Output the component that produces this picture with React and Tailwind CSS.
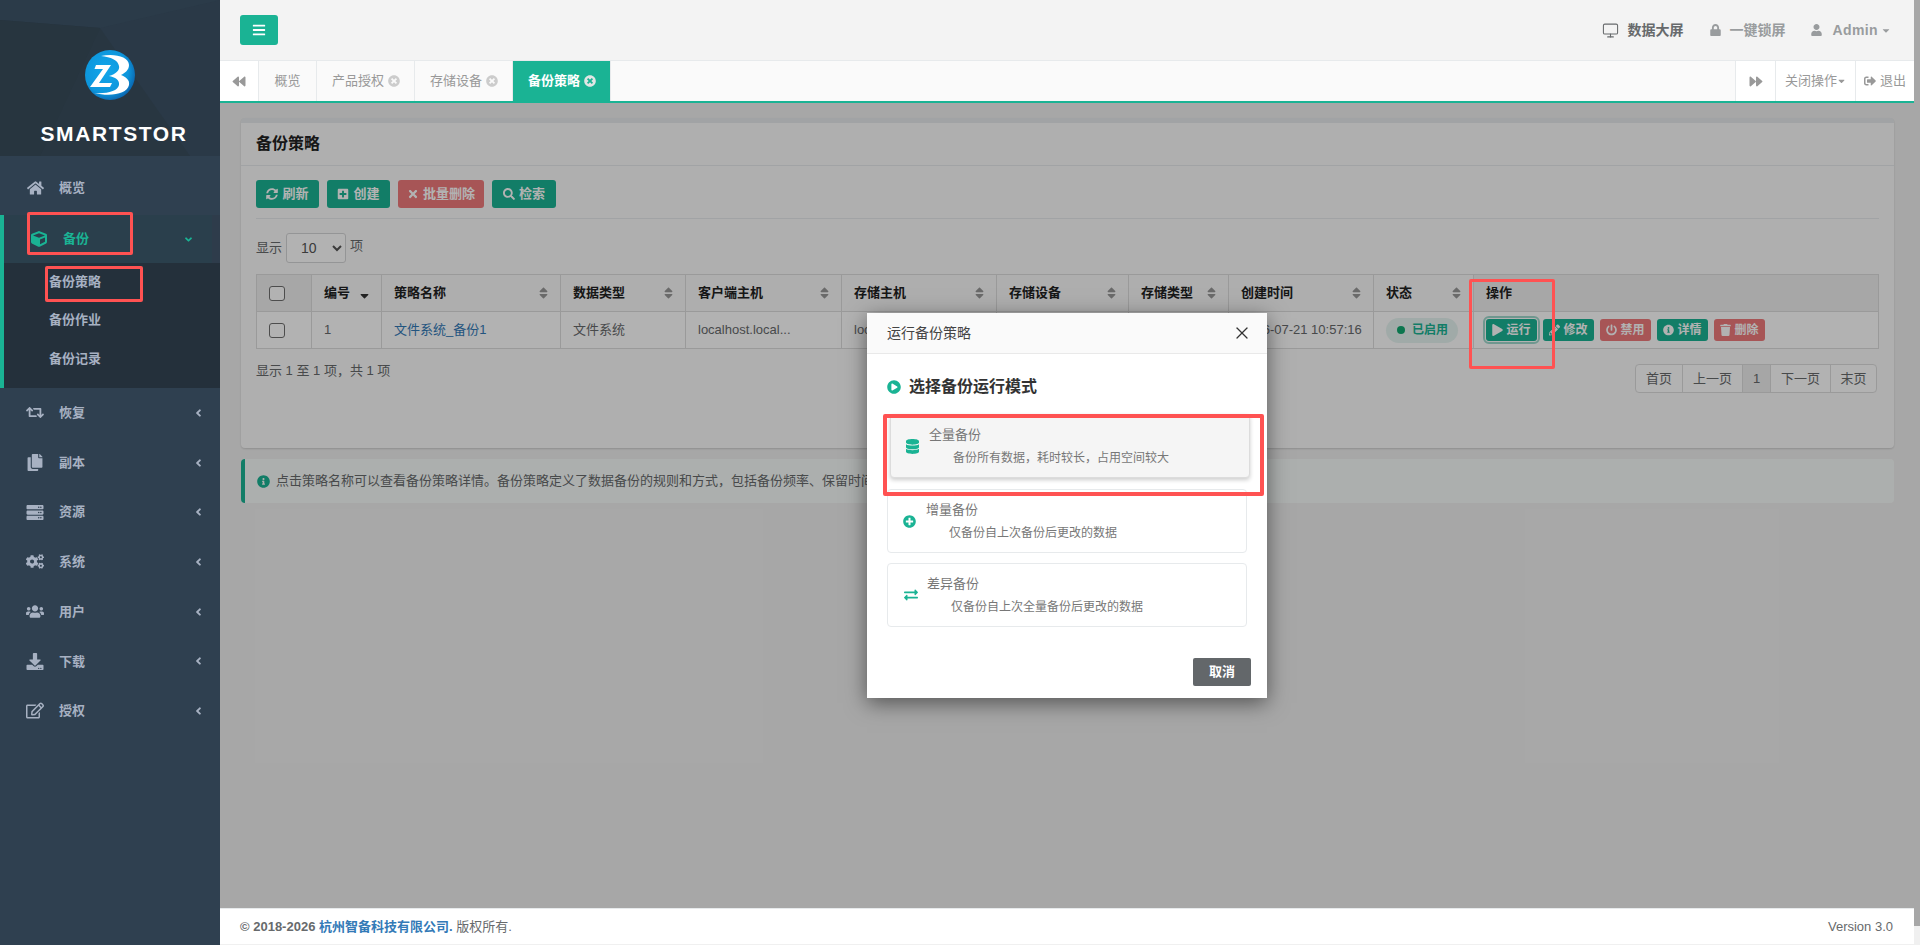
import React from 'react';
import { FaHome, FaCube, FaRetweet, FaCopy, FaServer, FaCogs, FaUsers, FaDownload, FaRegEdit, FaAngleLeft, FaAngleDown, FaBars, FaLock, FaUser, FaCaretDown, FaBackward, FaForward, FaSignOutAlt, FaTimesCircle, FaSyncAlt, FaPlusSquare, FaTimes, FaSearch, FaSort, FaSortDown, FaPlay, FaPencilAlt, FaPowerOff, FaInfoCircle, FaTrash, FaDatabase, FaPlusCircle, FaExchangeAlt, FaPlayCircle } from 'react-icons/fa';
import { Monitor, X } from 'lucide-react';

const FONT = '"Liberation Sans","Noto Sans CJK SC",sans-serif';

function Logo() {
  return (
    <svg width="50" height="50" viewBox="0 0 50 50">
      <defs>
        <radialGradient id="lg" cx="42%" cy="42%" r="62%">
          <stop offset="0%" stopColor="#12a6ea" />
          <stop offset="72%" stopColor="#0d96dc" />
          <stop offset="100%" stopColor="#0a63ad" />
        </radialGradient>
      </defs>
      <circle cx="25" cy="25" r="25" fill="url(#lg)" />
      <path d="M16 6C28 3 44 6 44 15C44 20 40 23 36 25C41 27 45 30 44 35C42 44 26 47 9 43C22 44 33 41 34 35C35 30 30 27 24 26C31 24 35 20 34 16C33 10 26 7 16 6Z" fill="#fff" />
      <path d="M11 15L26 15L14 33L27 33L25 37L5 37L18 19L9.500 19Z" fill="#fff" />
    </svg>
  );
}

const navItems = [
  [FaRetweet, '恢复'],
  [FaCopy, '副本'],
  [FaServer, '资源'],
  [FaCogs, '系统'],
  [FaUsers, '用户'],
  [FaDownload, '下载'],
  [FaRegEdit, '授权'],
];

function Sidebar() {
  return (
    <aside className="w-[220px] shrink-0 bg-[#2f4050] text-[13px] font-bold text-[#a7b1c2] flex flex-col">
      <div className="relative h-[156px] bg-[#283641] overflow-hidden flex flex-col items-center">
        <svg className="absolute inset-0" width="220" height="156" viewBox="0 0 220 156">
          <polygon points="0,0 220,0 220,30 100,28 0,20" fill="#2b3b49" />
          <polygon points="100,28 220,0 220,156 190,156" fill="#2a3947" />
          <polygon points="0,20 100,28 40,156 0,156" fill="#27353f" />
        </svg>
        <div className="relative mt-[50px] h-[50px]"><Logo /></div>
        <div className="relative mt-[22px] pl-[8px] text-white text-[21px] leading-[24px] font-bold tracking-[1.600px]">SMARTSTOR</div>
      </div>
      <div className="h-[59px] flex items-center pl-[27px] pt-[5px]">
        <FaHome className="w-[17px] h-[16px]" />
        <span className="ml-[15px]">概览</span>
      </div>
      <div className="border-l-4 border-[#1ab394] bg-[#24303b]">
        <div className="h-[48px] bg-[#2e3c4b]">
          <div className="h-full w-[208px] bg-[#2a3f4c] flex items-center text-[#1ab394] pl-[27px]">
            <FaCube className="w-[16px] h-[16px]" />
            <span className="ml-[16px] flex-1">备份</span>
            <FaAngleDown className="w-[11px] h-[11px] mr-[18px]" />
          </div>
        </div>
        <div className="h-[125px] pl-[45px] pt-[0px]">
          <div className="h-[38px] leading-[38px]">备份策略</div>
          <div className="h-[38px] leading-[38px]">备份作业</div>
          <div className="h-[38px] leading-[40px]">备份记录</div>
        </div>
      </div>
      {navItems.map(([Icon, label]) => (
        <div key={label} className="h-[49.700px] flex items-center pl-[26px] pr-[16px]">
          <Icon className="w-[18px] h-[17px]" />
          <span className="ml-[15px] flex-1">{label}</span>
          <FaAngleLeft className="w-[11px] h-[12px]" />
        </div>
      ))}
    </aside>
  );
}

function TopBar() {
  return (
    <div className="relative z-20 h-[61px] shrink-0 bg-[#f3f3f3] border-b border-[#e7eaec] flex items-center justify-between pl-[20px] pr-[23px] text-[14px] font-bold">
      <div className="w-[38px] h-[30px] rounded-[3px] bg-[#1ab394] text-white flex items-center justify-center">
        <FaBars className="w-[14px] h-[14px]" />
      </div>
      <div className="flex items-center text-[#999c9e]">
        <Monitor className="w-[17px] h-[17px] text-[#676a6c]" strokeWidth={1.500} />
        <span className="ml-[8px] text-[#676a6c]">数据大屏</span>
        <FaLock className="ml-[27px] w-[11px] h-[12px]" />
        <span className="ml-[8px]">一键锁屏</span>
        <FaUser className="ml-[26px] w-[11px] h-[12px]" />
        <span className="ml-[10px] tracking-[0.400px]">Admin</span>
        <FaCaretDown className="ml-[3px] w-[10px] h-[11px]" />
      </div>
    </div>
  );
}

function Tab({ label, active, closable }) {
  return (
    <div className={`h-full flex items-center pl-[15px] pr-[14px] border-r border-[#e7eaec] ${active ? 'bg-[#1ab394] text-white font-bold border-[#1ab394]' : 'text-[#999]'}`}>
      <span>{label}</span>
      {closable && <FaTimesCircle className={`ml-[4px] w-[12px] h-[12px] ${active ? 'text-[#e0e6e4]' : 'text-[#ccc]'}`} />}
    </div>
  );
}

function TabBar() {
  return (
    <div className="relative z-20 h-[42px] shrink-0 bg-[#fafafa] border-b-2 border-[#1ab394] flex text-[13px]">
      <div className="w-[39px] bg-white border-r border-[#e7eaec] flex items-center justify-center text-[#999]">
        <FaBackward className="w-[14px] h-[13px]" />
      </div>
      <div className="w-[58px] flex items-center justify-center border-r border-[#e7eaec] text-[#999]">概览</div>
      <Tab label="产品授权" closable />
      <Tab label="存储设备" closable />
      <Tab label="备份策略" closable active />
      <div className="flex-1" />
      <div className="w-[40px] bg-white border-l border-[#e7eaec] flex items-center justify-center text-[#999]">
        <FaForward className="w-[14px] h-[13px]" />
      </div>
      <div className="w-[80px] bg-white border-l border-[#e7eaec] flex items-center justify-center text-[#999]">
        关闭操作<FaCaretDown className="w-[9px] h-[10px]" />
      </div>
      <div className="w-[59px] bg-white border-l border-[#e7eaec] flex items-center justify-center text-[#999]">
        <FaSignOutAlt className="w-[12px] h-[12px] mr-[4px]" />退出
      </div>
    </div>
  );
}

function ToolButton({ icon: Icon, label, red, w }) {
  return (
    <button className={`h-[28px] rounded-[3px] text-white text-[13px] font-bold flex items-center justify-center gap-[4px] ${w} ${red ? 'bg-[#ef7a7c]' : 'bg-[#1ab394]'}`}>
      <Icon className="w-[12px] h-[12px]" />
      <span>{label}</span>
    </button>
  );
}

function RowButton({ icon: Icon, label, red, focus }) {
  return (
    <button className={`w-[51px] h-[22px] rounded-[3px] text-white text-[12px] font-bold flex items-center justify-center gap-[3px] ${red ? 'bg-[#ef7a7c]' : 'bg-[#1ab394]'} ${focus ? 'outline-[2px] outline-offset-[1px] outline-[#9fd9cd]' : ''}`}>
      <Icon className="w-[11px] h-[12px]" />
      <span>{label}</span>
    </button>
  );
}

const columns = [
  ['编号', 70, 'down'],
  ['策略名称', 179, 'sort'],
  ['数据类型', 125, 'sort'],
  ['客户端主机', 156, 'sort'],
  ['存储主机', 155, 'sort'],
  ['存储设备', 132, 'sort'],
  ['存储类型', 100, 'sort'],
  ['创建时间', 145, 'sort'],
  ['状态', 100, 'sort'],
];

function Checkbox() {
  return <div className="w-[16px] h-[15px] rounded-[3px] border border-[#6f6f6f] bg-white" />;
}

function DataTable() {
  const td = 'border border-[#dddddd] pl-[12px] pr-[8px] h-[37px] truncate';
  return (
    <table className="w-[1622px] table-fixed border-collapse text-[13px] text-[#676a6c]">
      <colgroup>
        <col className="w-[55px]" />
        {columns.map((c) => <col key={c[0]} style={{ width: c[1] }} />)}
        <col className="w-[405px]" />
      </colgroup>
      <thead>
        <tr className="h-[37px] text-[#222] font-bold text-left">
          <th className="border border-[#dddddd] px-[12px] bg-[#f0f0f0]"><Checkbox /></th>
          {columns.map(([label, , kind]) => (
            <th key={label} className="border border-[#dddddd] pl-[12px] pr-[11px] bg-[#f9f9f9]">
              <div className="flex items-center justify-between">
                <span>{label}</span>
                {kind === 'down'
                  ? <FaSortDown className="w-[11px] h-[14px] text-[#333]" />
                  : <FaSort className="w-[11px] h-[14px] text-[#999]" />}
              </div>
            </th>
          ))}
          <th className="border border-[#dddddd] px-[12px] bg-[#f0f0f0]">操作</th>
        </tr>
      </thead>
      <tbody>
        <tr className="bg-white">
          <td className={td}><Checkbox /></td>
          <td className={td}>1</td>
          <td className={`${td} text-[#337ab7]`}>文件系统_备份1</td>
          <td className={td}>文件系统</td>
          <td className={td}>localhost.local...</td>
          <td className={td}>localhost.local...</td>
          <td className={td}></td>
          <td className={td}></td>
          <td className={td}>2026-07-21 10:57:16</td>
          <td className={td}>
            <div className="w-[72px] h-[25px] rounded-full bg-[#e6f4f1] flex items-center pl-[11px] text-[12px] font-bold text-[#1ab394]">
              <span className="w-[8px] h-[8px] rounded-full bg-[#10a970]" />
              <span className="ml-[7px]">已启用</span>
            </div>
          </td>
          <td className={td}>
            <div className="flex gap-[6px]">
              <RowButton icon={FaPlay} label="运行" focus />
              <RowButton icon={FaPencilAlt} label="修改" />
              <RowButton icon={FaPowerOff} label="禁用" red />
              <RowButton icon={FaInfoCircle} label="详情" />
              <RowButton icon={FaTrash} label="删除" red />
            </div>
          </td>
        </tr>
      </tbody>
    </table>
  );
}

function Pagination() {
  const items = [['首页', 46], ['上一页', 60], ['1', 28], ['下一页', 60], ['末页', 46]];
  return (
    <div className="flex h-[29px] mr-[2px] rounded-[4px] border border-[#dddddd] bg-white text-[#676a6c] text-[13px] overflow-hidden">
      {items.map(([t, w], i) => (
        <div key={t} style={{ width: w }} className={`flex items-center justify-center ${i ? 'border-l border-[#dddddd]' : ''} ${t === '1' ? 'bg-[#eeeeee]' : ''}`}>{t}</div>
      ))}
    </div>
  );
}

function Content() {
  return (
    <div className="flex-1 bg-[#f0f0f0] pl-[21px] pr-[20px] pt-[15px] text-[13px] text-[#676a6c]">
      <div className="bg-[#fbfbfb] border-t-[5px] border-[#e7eaec] rounded-[4px] shadow-[0_1px_2px_rgba(0,0,0,0.15)]">
        <div className="h-[43px] flex items-center px-[15px] border-b border-[#e7eaec] text-[16px] font-bold text-[#222]">备份策略</div>
        <div className="px-[15px] pt-[14px] pb-[55px]">
          <div className="flex gap-[8px]">
            <ToolButton icon={FaSyncAlt} label="刷新" w="w-[63px]" />
            <ToolButton icon={FaPlusSquare} label="创建" w="w-[63px]" />
            <ToolButton icon={FaTimes} label="批量删除" red w="w-[86px]" />
            <ToolButton icon={FaSearch} label="检索" w="w-[64px]" />
          </div>
          <div className="h-px bg-[#e7eaec] mt-[10px]" />
          <div className="flex items-center mt-[14px] h-[30px]">
            <span className="-mt-[1px]">显示</span>
            <select defaultValue="10" className="ml-[4px] mr-[4px] w-[60px] h-[30px] rounded-[3px] border border-[#d5d6d7] bg-white text-[14px] text-[#555] pl-[10px]">
              <option>10</option>
            </select>
            <span className="-mt-[5px]">项</span>
          </div>
          <div className="mt-[11px]"><DataTable /></div>
          <div className="mt-[15px] flex justify-between items-start">
            <span className="leading-[14px]">显示 1 至 1 项，共 1 项</span>
            <Pagination />
          </div>
        </div>
      </div>
      <div className="mt-[11px] h-[44px] bg-[#f7fbf9] border-l-4 border-[#1ab394] rounded-[4px] flex items-center pl-[12px]">
        <FaInfoCircle className="w-[13px] h-[13px] text-[#1ab394]" />
        <span className="ml-[6px]">点击策略名称可以查看备份策略详情。备份策略定义了数据备份的规则和方式，包括备份频率、保留时间等。</span>
      </div>
    </div>
  );
}

function Footer() {
  return (
    <div className="relative z-20 h-[36px] mb-px shrink-0 bg-white border-t border-[#e7eaec] flex items-center justify-between pl-[20px] pr-[21px] text-[13px] text-[#676a6c]">
      <div>
        <span className="font-bold">© 2018-2026 </span>
        <span className="font-bold text-[#337ab7]">杭州智备科技有限公司.</span>
        <span> 版权所有.</span>
      </div>
      <div>Version 3.0</div>
    </div>
  );
}

function Option({ icon: Icon, iconClass, title, desc, indent, gap, hover }) {
  return (
    <div className={`h-[64px] rounded-[4px] border flex items-center pl-[15px] text-[#777] ${hover ? 'bg-[#f5f5f5] border-[#dcdcdc] shadow-[0_2px_4px_rgba(0,0,0,0.2)] translate-x-[3px] -translate-y-[1px]' : 'bg-white border-[#e7eaec]'}`}>
      <Icon className={`text-[#1ab394] shrink-0 ${iconClass}`} />
      <div style={{ marginLeft: gap }}>
        <div className="text-[13px] leading-[18px]">{title}</div>
        <div style={{ marginLeft: indent }} className="mt-[5px] text-[12px] leading-[18px]">{desc}</div>
      </div>
    </div>
  );
}

function Modal() {
  return (
    <div className="absolute z-30 left-[867px] top-[313px] w-[400px] bg-white shadow-[0_5px_20px_rgba(0,0,0,0.5)]">
      <div className="h-[41px] bg-[#fafafa] border-b border-[#e9e9e9] flex items-center justify-between pl-[20px] pr-[15px] text-[14px] text-[#444]">
        <span>运行备份策略</span>
        <X className="w-[20px] h-[20px] text-[#333]" strokeWidth={1.500} />
      </div>
      <div className="pt-[21px] px-[20px]">
        <div className="h-[24px] flex items-center text-[16px] font-bold text-[#333] mb-[16px]">
          <FaPlayCircle className="w-[14px] h-[14px] text-[#1ab394] mr-[8px]" />
          选择备份运行模式
        </div>
        <div className="flex flex-col gap-[10px] w-[360px]">
          <Option hover icon={FaDatabase} iconClass="w-[13px] h-[15px]" gap={10} indent={24} title="全量备份" desc="备份所有数据，耗时较长，占用空间较大" />
          <Option icon={FaPlusCircle} iconClass="w-[13px] h-[13px]" gap={10} indent={23} title="增量备份" desc="仅备份自上次备份后更改的数据" />
          <Option icon={FaExchangeAlt} iconClass="w-[16px] h-[14px]" gap={8} indent={24} title="差异备份" desc="仅备份自上次全量备份后更改的数据" />
        </div>
      </div>
      <div className="pt-[31px] pb-[12px] pr-[16px] flex justify-end">
        <button className="w-[58px] h-[28px] rounded-[2px] bg-[#63676a] text-white text-[13px] font-bold">取消</button>
      </div>
    </div>
  );
}

function Annotations() {
  const cls = 'absolute z-40 border-[#ff5252] rounded-[2px] pointer-events-none';
  return (
    <>
      <div className={`${cls} border-[3px] left-[27px] top-[212px] w-[106px] h-[43px]`} />
      <div className={`${cls} border-[3px] left-[45px] top-[266px] w-[98px] h-[36px]`} />
      <div className={`${cls} border-[3px] left-[1469px] top-[279px] w-[86px] h-[90px]`} />
      <div className={`${cls} border-[4px] left-[883px] top-[414px] w-[381px] h-[82px]`} />
    </>
  );
}

export default function App() {
  return (
    <div className="relative w-full h-[945px] flex overflow-hidden bg-[#f0f0f0]" style={{ fontFamily: FONT }}>
      <Sidebar />
      <main className="flex-1 min-w-0 pr-[6px] flex flex-col">
        <TopBar />
        <TabBar />
        <Content />
        <Footer />
      </main>
      <div className="absolute z-10 left-[220px] right-0 top-0 bottom-[19px] bg-black/30" />
      <Modal />
      <Annotations />
    </div>
  );
}
